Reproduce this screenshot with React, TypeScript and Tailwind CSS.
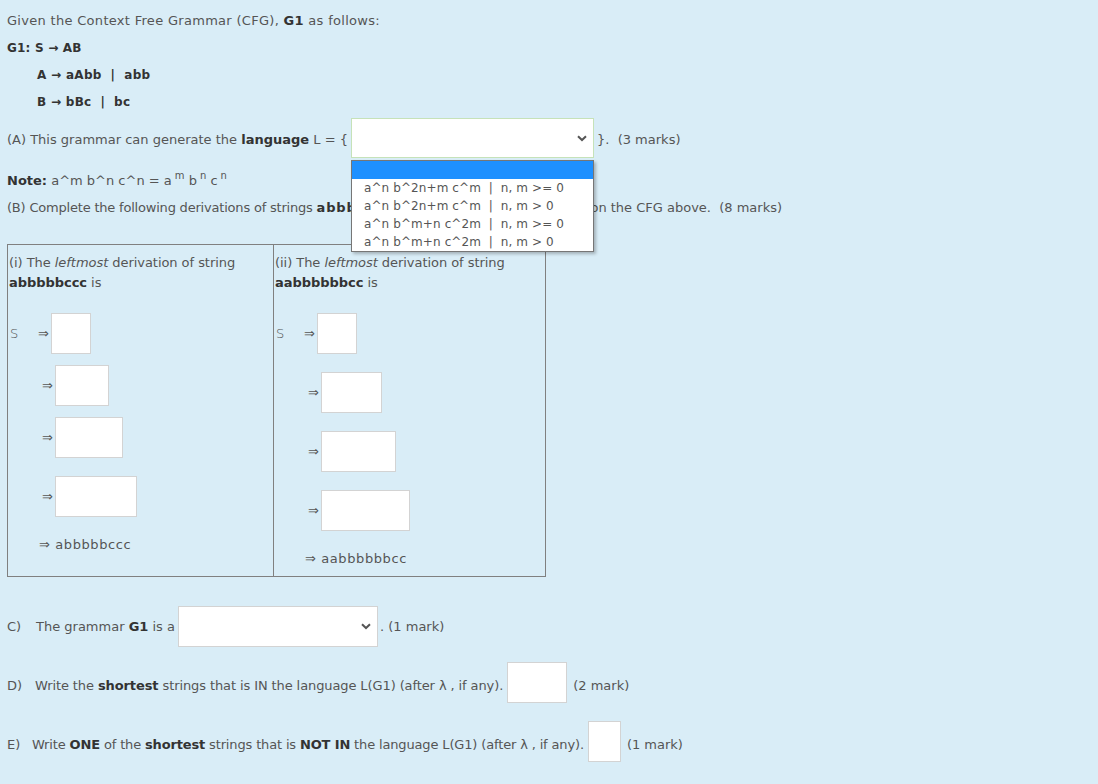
import React from "react";

const font = { fontFamily: '"DejaVu Sans", "Liberation Sans", sans-serif' };

const options = [
  "a^n b^2n+m c^m  |  n, m >= 0",
  "a^n b^2n+m c^m  |  n, m > 0",
  "a^n b^m+n c^2m  |  n, m >= 0",
  "a^n b^m+n c^2m  |  n, m > 0",
];

const Chevron = () => (
  <svg width="10" height="7" viewBox="0 0 10 7" className="text-[#555]">
    <path d="M1 1.2 L5 5 L9 1.2" fill="none" stroke="currentColor" strokeWidth="2" />
  </svg>
);

const Box = ({ w, h = 41 }: { w: number; h?: number }) => (
  <span
    className="inline-block bg-white border border-[#d3d3d3] shrink-0"
    style={{ width: w, height: h }}
  />
);

const Step = ({ lead, arrowX, boxW, mt }: { lead?: string; arrowX: number; boxW: number; mt: number }) => (
  <div className="flex items-center" style={{ marginTop: mt }}>
    {lead ? <span className="w-[29px] pl-[1px] font-light">{lead}</span> : <span style={{ width: arrowX }} />}
    <span className="w-[13px] text-[13px]">⇒</span>
    <Box w={boxW} />
  </div>
);

export default function App() {
  return (
    <div
      className="w-[1098px] min-h-[784px] bg-[#d9edf7] text-[#555] text-[13px] pl-[7px] pt-[7px]"
      style={font}
    >
      <div className="h-[27px] flex items-center tracking-[0.3px]">
        Given the Context Free Grammar (CFG),&nbsp;<b className="text-[#333]">G1</b>&nbsp;as follows:
      </div>
      <div className="h-[27px] flex items-center font-bold text-[#333] text-[12px] tracking-[0.2px]">G1: S → AB</div>
      <div className="h-[27px] flex items-center font-bold text-[#333] text-[12px] pl-[30px] tracking-[0.3px]">A → aAbb&nbsp; |&nbsp; abb</div>
      <div className="h-[27px] flex items-center font-bold text-[#333] text-[12px] pl-[30px] tracking-[0.3px]">B → bBc&nbsp; |&nbsp; bc</div>

      {/* (A) */}
      <div className="mt-[3px] h-[40px] flex items-center">
        <span className="mt-[3px]">
          (A) This grammar can generate the <b className="text-[#333]">language</b> L = {"{"}
        </span>
        <div className="relative ml-[3px]">
          <div className="w-[243px] h-[40px] bg-white border border-[#c6e2b9] flex items-center justify-end pr-[6px]">
            <Chevron />
          </div>
          <div className="absolute left-0 top-[42px] w-[243px] bg-white border border-[#767676] shadow-[2px_2px_3px_rgba(0,0,0,0.25)] z-10 text-[12px] text-[#555]">
            <div className="h-[18px] bg-[#1e90ff]" />
            {options.map((o) => (
              <div key={o} className="h-[18px] flex items-center pl-[12px] whitespace-pre tracking-[0.1px]">
                {o}
              </div>
            ))}
          </div>
        </div>
        <span className="ml-[3px] mt-[3px]">{"}"}.&nbsp; (3 marks)</span>
      </div>

      {/* Note */}
      <div className="mt-[9px] h-[27px] flex items-center">
        <b className="text-[#333]">Note:</b>&nbsp;a^m b^n c^n = a
        <sup className="text-[10px] relative -top-[5px] ml-[3px]">m</sup>&nbsp;b
        <sup className="text-[10px] relative -top-[5px] ml-[3px]">n</sup>&nbsp;c
        <sup className="text-[10px] relative -top-[5px] ml-[3px]">n</sup>
      </div>

      {/* (B) */}
      <div className="h-[27px] flex items-center whitespace-nowrap">
        <span className="tracking-[-0.2px]">(B) Complete the following derivations of strings&nbsp;</span>
        <span className="tracking-[0.85px]">
          <b className="text-[#333]">abbbbbccc</b>&nbsp;and&nbsp;<b className="text-[#333]">aabbbbbbcc</b>&nbsp;based&nbsp;
        </span>
        <span>on the CFG above.&nbsp; (8 marks)</span>
      </div>

      {/* Table */}
      <div className="mt-[23px] w-[539px] border border-[#808080] flex">
        <div className="w-[266px] border-r border-[#808080] pt-[8px] pl-[1px] pb-[21px]">
          <div className="leading-[20px] tracking-[-0.05px]">
            (i) The <i>leftmost</i> derivation of string
            <br />
            <b className="text-[#333]">abbbbbccc</b> is
          </div>
          <div className="mt-[20px]">
            <Step lead="S" arrowX={33} boxW={40} mt={0} />
            <Step arrowX={33} boxW={54} mt={11} />
            <Step arrowX={33} boxW={68} mt={11} />
            <Step arrowX={33} boxW={82} mt={18} />
          </div>
          <div className="mt-[18px] pl-[30px] leading-[20px] tracking-[0.6px]">
            <span className="text-[13px]">⇒</span> abbbbbccc
          </div>
        </div>
        <div className="flex-1 pt-[8px] pl-[1px] pb-[7px]">
          <div className="leading-[20px] tracking-[-0.05px]">
            (ii) The <i>leftmost</i> derivation of string
            <br />
            <b className="text-[#333]">aabbbbbbcc</b> is
          </div>
          <div className="mt-[20px]">
            <Step lead="S" arrowX={33} boxW={40} mt={0} />
            <Step arrowX={33} boxW={61} mt={18} />
            <Step arrowX={33} boxW={75} mt={18} />
            <Step arrowX={33} boxW={89} mt={18} />
          </div>
          <div className="mt-[18px] pl-[30px] leading-[20px] tracking-[0.6px]">
            <span className="text-[13px]">⇒</span> aabbbbbbcc
          </div>
        </div>
      </div>

      {/* C */}
      <div className="mt-[29px] h-[41px] flex items-center">
        <span className="w-[29px]">C)</span>
        <span>
          The grammar <b className="text-[#333]">G1</b> is a
        </span>
        <div className="ml-[3px] w-[200px] h-[41px] bg-white border border-[#d3d3d3] flex items-center justify-end pr-[6px]">
          <Chevron />
        </div>
        <span className="ml-[2px]">. (1 mark)</span>
      </div>

      {/* D */}
      <div className="mt-[18px] h-[41px] flex items-center">
        <span className="w-[28px]">D)</span>
        <span className="tracking-[-0.1px]">
          Write the <b className="text-[#333]">shortest</b> strings that is IN the language L(G1) (after λ , if any).
        </span>
        <span className="ml-[4px]">
          <Box w={60} />
        </span>
        <span className="ml-[6px]">(2 mark)</span>
      </div>

      {/* E */}
      <div className="mt-[18px] h-[41px] flex items-center">
        <span className="w-[25px]">E)</span>
        <span className="tracking-[-0.15px]">
          Write <b className="text-[#333]">ONE</b> of the <b className="text-[#333]">shortest</b> strings that is{" "}
          <b className="text-[#333]">NOT IN</b> the language L(G1) (after λ , if any).
        </span>
        <span className="ml-[4px]">
          <Box w={33} />
        </span>
        <span className="ml-[6px]">(1 mark)</span>
      </div>
    </div>
  );
}
